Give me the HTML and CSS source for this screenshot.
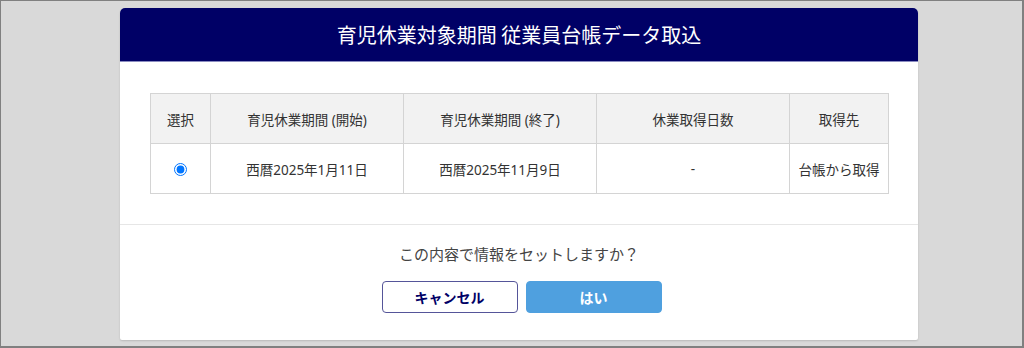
FILE: index.html
```html
<!DOCTYPE html>
<html lang="ja">
<head>
    <meta charset="UTF-8">
    <meta name="viewport" content="width=device-width, initial-scale=1.0">
    <title>育児休業対象期間 従業員台帳データ取込</title>
    <link rel="stylesheet" href="styles.css">
</head>
<body>

<div class="screen">
    <div class="dialog">
        <div class="dialog-header">育児休業対象期間 従業員台帳データ取込</div>

        <!-- 取込候補 -->
        <div class="dialog-body">
            <table class="period-table">
                <thead>
                    <tr>
                        <th class="col-select">選択</th>
                        <th class="col-date">育児休業期間 (開始)</th>
                        <th class="col-date">育児休業期間 (終了)</th>
                        <th class="col-date">休業取得日数</th>
                        <th class="col-source">取得先</th>
                    </tr>
                </thead>
                <tbody>
                    <tr>
                        <td><input type="radio" name="period" checked></td>
                        <td>西暦2025年1月11日</td>
                        <td>西暦2025年11月9日</td>
                        <td>-</td>
                        <td>台帳から取得</td>
                    </tr>
                </tbody>
            </table>
        </div>

        <!-- 確認 -->
        <div class="dialog-footer">
            <p class="confirm-text">この内容で情報をセットしますか？</p>
            <div class="buttons">
                <button class="btn btn-cancel">キャンセル</button>
                <button class="btn btn-ok">はい</button>
            </div>
        </div>
    </div>
</div>

</body>
</html>
```

FILE: styles.css
```css
body {
    margin: 0;
    padding: 0;
    font-family: "Noto Sans", "Noto Sans CJK JP", sans-serif;
    color: #333;
}

.screen {
    box-sizing: border-box;
    width: 1024px;
    height: 348px;
    background-color: #d9d9d9;
    border: 1px solid #808080;
    border-right-width: 2px;
    border-bottom-width: 2px;
    padding-top: 7px;
    padding-left: 119px;
}

.dialog {
    width: 798px;
    height: 332px;
    background-color: #fff;
    border-radius: 5px 5px 2px 2px;
    box-shadow: 0px 1px 2px rgba(0, 0, 0, 0.15);
    overflow: hidden;
}

.dialog-header {
    height: 53px;
    background-color: #000066;
    border-bottom: 1px solid #8a8cc0;
    color: #fff;
    font-family: "Noto Sans CJK JP", sans-serif;
    font-size: 20px;
    line-height: 54px;
    text-align: center;
}

.dialog-body {
    padding: 31px 29px 30px 30px;
    border-bottom: 1px solid #e6e6e6;
}

.period-table {
    width: 739px;
    border-collapse: collapse;
    font-size: 13.5px;
    color: #333;
}

.period-table th,
.period-table td {
    height: 49px;
    padding: 0;
    border: 1px solid #d4d4d4;
    text-align: center;
    font-weight: normal;
}

.period-table th {
    background-color: #f2f2f2;
}

.col-select {
    width: 59px;
}

.col-date {
    width: 192px;
}

.period-table input[type="radio"] {
    margin: 0;
    width: 13px;
    height: 13px;
    vertical-align: middle;
}

.dialog-footer {
    text-align: center;
}

.confirm-text {
    margin: 18px 0 16px;
    font-family: "Noto Sans CJK JP", sans-serif;
    font-size: 15px;
    line-height: 22px;
    color: #444;
}

.buttons {
    display: flex;
    justify-content: center;
    gap: 8px;
    padding-left: 5px;
}

.btn {
    width: 136px;
    height: 32px;
    border-radius: 4px;
    font-family: "Noto Sans CJK JP", sans-serif;
    font-size: 14px;
    font-weight: bold;
    cursor: pointer;
}

.btn-cancel {
    background-color: #fff;
    border: 1px solid #555599;
    color: #000066;
}

.btn-ok {
    background-color: #4fa0df;
    border: 1px solid #4fa0df;
    color: #fff;
}
```
